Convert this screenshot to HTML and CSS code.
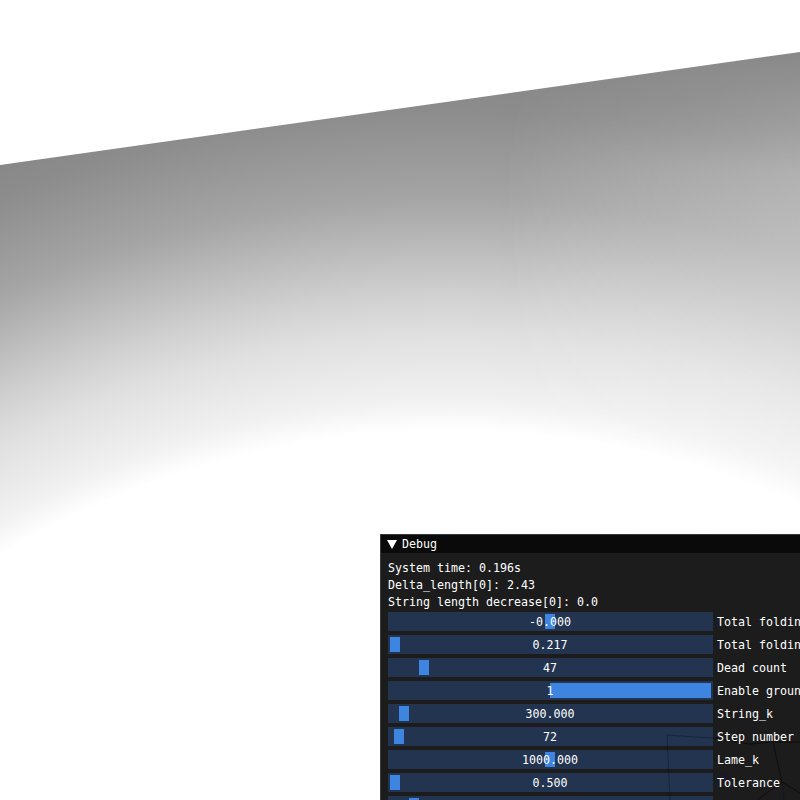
FILE: index.html
```html
<!DOCTYPE html>
<html lang="en">
<head>
    <meta charset="UTF-8">
    <title>Debug</title>
    <link rel="stylesheet" href="styles.css">
</head>
<body>
    <div class="ground"></div>
    <div class="debug">
        <div class="title">
            <span class="arrow"></span>
            <span>Debug</span>
        </div>
        <svg class="mesh" width="420" height="266" viewBox="380 534 420 266">
            <polyline class="edge-blue" points="667,735 695,737 713,738" />
            <polyline class="edge-blue" points="667,735 670,800" />
            <polyline class="edge-dark" points="713,738 750,744 773,742 800,742" />
            <polyline class="edge-dark" points="773,742 782,782" />
            <polyline class="edge-blue" points="782,782 784,800" />
            <polyline class="edge-dark" points="782,782 757,800" />
            <polyline class="edge-dark" points="782,782 800,793" />
            <circle class="joint" cx="725" cy="778" r="5" />
        </svg>
        <div class="content">
            <p>System time: 0.196s</p>
            <p>Delta_length[0]: 2.43</p>
            <p>String length decrease[0]: 0.0</p>
            <div class="row">
                <div class="slider"><span class="grab" style="left: 157px"></span><span class="value">-0.000</span></div>
                <label>Total foldin</label>
            </div>
            <div class="row">
                <div class="slider"><span class="grab" style="left: 2px"></span><span class="value">0.217</span></div>
                <label>Total foldin</label>
            </div>
            <div class="row">
                <div class="slider"><span class="grab" style="left: 31px"></span><span class="value">47</span></div>
                <label>Dead count</label>
            </div>
            <div class="row">
                <div class="slider"><span class="grab grab-wide"></span><span class="value">1</span></div>
                <label>Enable groun</label>
            </div>
            <div class="row">
                <div class="slider"><span class="grab" style="left: 11px"></span><span class="value">300.000</span></div>
                <label>String_k</label>
            </div>
            <div class="row">
                <div class="slider"><span class="grab" style="left: 6px"></span><span class="value">72</span></div>
                <label>Step number</label>
            </div>
            <div class="row">
                <div class="slider"><span class="grab" style="left: 157px"></span><span class="value">1000.000</span></div>
                <label>Lame_k</label>
            </div>
            <div class="row">
                <div class="slider"><span class="grab" style="left: 2px"></span><span class="value">0.500</span></div>
                <label>Tolerance</label>
            </div>
            <div class="row">
                <div class="slider"><span class="grab" style="left: 21px"></span></div>
            </div>
        </div>
    </div>
</body>
</html>
```

FILE: styles.css
```css
html, body {
    height: 100%;
    margin: 0;
    overflow: hidden;
    background: #fff;
}

.ground {
    position: absolute;
    left: 0;
    top: 0;
    width: 800px;
    height: 800px;
    clip-path: polygon(0 165px, 800px 52px, 800px 800px, 0 800px);
    background: radial-gradient(circle 1300px at 450px 1300px,
        #fff 870px, #f1f1f1 900px, #e0e0e0 965px, #d0d0d0 1006px,
        #a5a5a5 1101px, #8c8c8c 1190px, #888 1221px);
}

/* right side of the plane is lit a bit more */
.ground::after {
    content: "";
    position: absolute;
    left: 0;
    top: 0;
    width: 100%;
    height: 100%;
    background: linear-gradient(to right, rgba(255, 255, 255, 0) 500px, rgba(255, 255, 255, 0.3) 800px);
    -webkit-mask-image: linear-gradient(to bottom, transparent 50px, #000 170px);
    mask-image: linear-gradient(to bottom, transparent 50px, #000 170px);
}

/* window runs off the frame on the right and bottom */
.debug {
    position: absolute;
    left: 380px;
    top: 534px;
    width: 420px;
    height: 266px;
    box-sizing: border-box;
    overflow: hidden;
    border: 1px solid #38383f;
    border-width: 1px 0 0 1px;
    background: #1c1c1c;
    color: #fff;
    font-family: "DejaVu Sans Mono", "Liberation Mono", monospace;
    font-size: 11.63px;
}

.title {
    display: flex;
    align-items: center;
    gap: 5px;
    height: 18px;
    padding-left: 6px;
    background: #0a0a0a;
}

.arrow {
    width: 0;
    height: 0;
    border-left: 5px solid transparent;
    border-right: 5px solid transparent;
    border-top: 9px solid #fff;
}

.mesh {
    position: absolute;
    left: -1px;
    top: -1px;
    z-index: 2;
    pointer-events: none;
}

.mesh polyline {
    fill: none;
    stroke-width: 1;
}

.edge-blue {
    stroke: rgba(10, 16, 34, 0.45);
}

.edge-dark {
    stroke: rgba(16, 8, 14, 0.8);
}

.joint {
    fill: #20162a;
}

.content {
    padding: 7px 7px 0;
}

.content p {
    height: 17px;
    margin: 0;
    line-height: 17px;
    white-space: nowrap;
}

.row {
    display: flex;
    align-items: center;
    gap: 4px;
    margin-bottom: 4px;
    white-space: nowrap;
}

.content p + .row {
    margin-top: 1px;
}

.slider {
    position: relative;
    flex: none;
    width: 325px;
    height: 19px;
    background: #233450;
    line-height: 21px;
    text-align: center;
}

.grab {
    position: absolute;
    top: 2px;
    width: 10px;
    height: 15px;
    background: #3d85e0;
}

.grab-wide {
    left: 162px;
    width: 161px;
}

.value {
    position: relative;
    left: -0.5px;
    z-index: 3;
}

label {
    position: relative;
    z-index: 3;
}
```
